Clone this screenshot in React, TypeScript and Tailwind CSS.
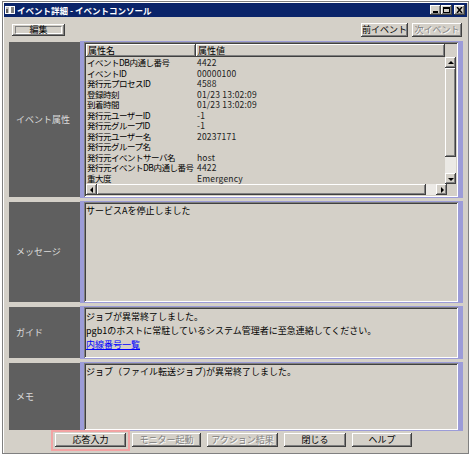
import React from 'react'

const raised =
  'bg-[#d4d0c8] shadow-[inset_-1px_-1px_#404040,inset_1px_1px_#ffffff,inset_-2px_-2px_#808080]'
const sunken = 'shadow-[inset_1px_1px_#808080,inset_-1px_-1px_#ffffff,inset_2px_2px_#404040]'

const rows: [string, string][] = [
  ['イベントDB内通し番号', '4422'],
  ['イベントID', '00000100'],
  ['発行元プロセスID', '4588'],
  ['登録時刻', '01/23 13:02:09'],
  ['到着時間', '01/23 13:02:09'],
  ['発行元ユーザーID', '-1'],
  ['発行元グループID', '-1'],
  ['発行元ユーザー名', '20237171'],
  ['発行元グループ名', ''],
  ['発行元イベントサーバ名', 'host'],
  ['発行元イベントDB内通し番号', '4422'],
  ['重大度', 'Emergency'],
]

function Arrow({ dir }: { dir: 'up' | 'down' | 'left' | 'right' }) {
  const pts = {
    up: '1,5 4,2 7,5',
    down: '1,3 4,6 7,3',
    left: '5,1 2,4 5,7',
    right: '3,1 6,4 3,7',
  }[dir]
  return (
    <div className={`w-[11px] h-[11px] shrink-0 flex items-center justify-center ${raised}`}>
      <svg width="8" height="8" viewBox="0 0 8 8">
        <polygon points={pts} fill="#000" />
      </svg>
    </div>
  )
}

function Btn({ label, w, disabled }: { label: string; w: string; disabled?: boolean }) {
  return (
    <div
      className={`${w} h-[14px] flex items-center justify-center ${raised} ${
        disabled ? 'text-[#808080] [text-shadow:1px_1px_#ffffff]' : 'text-black'
      }`}
    >
      {label}
    </div>
  )
}

function Section({ label, h, children }: { label: string; h: string; children: React.ReactNode }) {
  return (
    <div className={`flex ${h}`}>
      <div className="w-[71px] bg-[#5f5f5f] flex items-center pl-[7px] text-[#dcdcdc] my-[1px]">{label}</div>
      <div className="flex-1 bg-[#9c9cd8] pl-[4px] pr-[5px] py-[1px]">{children}</div>
    </div>
  )
}

export default function App() {
  return (
    <div className="w-[473px] h-[457px] bg-white pt-[1px] pl-[2px] font-['Noto_Sans_CJK_JP','Liberation_Sans',sans-serif] text-[9px] leading-[10px]">
      <div className="w-[467px] h-[453px] bg-[#d4d0c8] border border-[#808080] p-[1px] flex flex-col shadow-[inset_1px_1px_#ffffff]">
        {/* title bar */}
        <div className="h-[14px] bg-[#0a246a] flex items-center pl-[1px] pr-[2px]">
          <svg width="10" height="10" viewBox="0 0 10 10" className="mr-[2px]">
            <rect x="0.5" y="1.5" width="4" height="7" fill="#c0c0c0" stroke="#fff" />
            <rect x="5.5" y="1.5" width="4" height="7" fill="#808080" stroke="#fff" />
            <line x1="2" y1="4" x2="2" y2="8" stroke="#000" />
          </svg>
          <span className="text-white font-bold whitespace-pre text-[8.5px]">イベント詳細 - イベントコンソール</span>
          <div className="ml-auto flex items-center">
            <div className={`w-[11px] h-[10px] flex items-end justify-center pb-[2px] ${raised}`}>
              <div className="w-[5px] h-[2px] bg-black" />
            </div>
            <div className={`w-[11px] h-[10px] flex items-center justify-center ${raised}`}>
              <div className="w-[7px] h-[6px] border border-black border-t-2" />
            </div>
            <div className={`w-[11px] h-[10px] ml-[2px] flex items-center justify-center ${raised}`}>
              <svg width="7" height="6" viewBox="0 0 7 6">
                <path d="M1 0 L6 6 M6 0 L1 6" stroke="#000" strokeWidth="1.5" />
              </svg>
            </div>
          </div>
        </div>

        {/* toolbar */}
        <div className="h-[24px] flex items-start">
          <div className={`ml-[8px] mt-[7px] w-[53px] h-[12px] flex items-center justify-center ${raised}`}>
            <div className="w-[47px] h-[8px] border border-[#808080] border-b-white border-r-white flex items-center justify-center">
              編集
            </div>
          </div>
          <div className="ml-auto mr-[5px] mt-[6px] flex gap-[4px]">
            <Btn label="前イベント" w="w-[47px]" />
            <Btn label="次イベント" w="w-[50px]" disabled />
          </div>
        </div>

        {/* sections */}
        <div className="ml-[5px] mr-[4px] flex flex-col gap-[3px]">
          <Section label="イベント属性" h="h-[157px]">
            <div className={`h-full bg-[#d4d0c8] flex flex-col p-[2px] overflow-hidden ${sunken}`}>
              <div className="flex flex-1 min-h-0">
                <div className="flex-1 flex flex-col min-h-0 overflow-hidden">
                  <div className="flex h-[13px] shrink-0">
                    <div className={`w-[110px] pl-[2px] flex items-center ${raised}`}>属性名</div>
                    <div className={`flex-1 pl-[2px] flex items-center ${raised}`}>属性値</div>
                  </div>
                  <div>
                    {rows.map(([k, v]) => (
                      <div key={k} className="flex h-[10.5px] leading-[10.5px]">
                        <div className="w-[110px] shrink-0 pl-[1px] whitespace-nowrap text-[8.5px] tracking-[-0.5px]">{k}</div>
                        <div className="pl-[1px] whitespace-nowrap text-[8.5px] tracking-[0.2px] text-[#202020]">
                          {v}
                        </div>
                      </div>
                    ))}
                  </div>
                </div>
                <div className="w-[11px] flex flex-col pt-[13px]">
                  <Arrow dir="up" />
                  <div className={`h-[89px] shrink-0 ${raised}`} />
                  <div className="flex-1 bg-[#ebe9e5]" />
                  <Arrow dir="down" />
                </div>
              </div>
              <div className="flex h-[11px] shrink-0">
                <Arrow dir="left" />
                <div className={`w-[329px] shrink-0 ${raised}`} />
                <div className="flex-1 bg-[#ebe9e5]" />
                <Arrow dir="right" />
                <div className="w-[9px]" />
              </div>
            </div>
          </Section>

          <Section label="メッセージ" h="h-[102px]">
            <div className={`h-full bg-[#d4d0c8] pl-[2px] pt-[4px] ${sunken}`}>サービスAを停止しました</div>
          </Section>

          <Section label="ガイド" h="h-[53px]">
            <div className={`h-full bg-[#d4d0c8] pl-[2px] pt-[3px] leading-[14px] ${sunken}`}>
              <div>ジョブが異常終了しました。</div>
              <div>pgb1のホストに常駐しているシステム管理者に至急連絡してください。</div>
              <div className="text-[#0000ff] underline">内線番号一覧</div>
            </div>
          </Section>

          <Section label="メモ" h="h-[69px]">
            <div className={`h-full bg-[#d4d0c8] pl-[2px] pt-[4px] ${sunken}`}>
              ジョブ（ファイル転送ジョブ)が異常終了しました。
            </div>
          </Section>
        </div>

        {/* bottom buttons */}
        <div className="flex items-center gap-[6px] pl-[51px] mt-[2px]">
          <div className="relative">
            <Btn label="応答入力" w="w-[71px]" />
            <div className="absolute -left-[4px] -right-[4px] -top-[3px] -bottom-[4px] border-2 border-[#f2a4a4]" />
          </div>
          <Btn label="モニター起動" w="w-[69px]" disabled />
          <Btn label="アクション結果" w="w-[71px]" disabled />
          <Btn label="閉じる" w="w-[62px]" />
          <Btn label="ヘルプ" w="w-[60px]" />
        </div>
      </div>
    </div>
  )
}
